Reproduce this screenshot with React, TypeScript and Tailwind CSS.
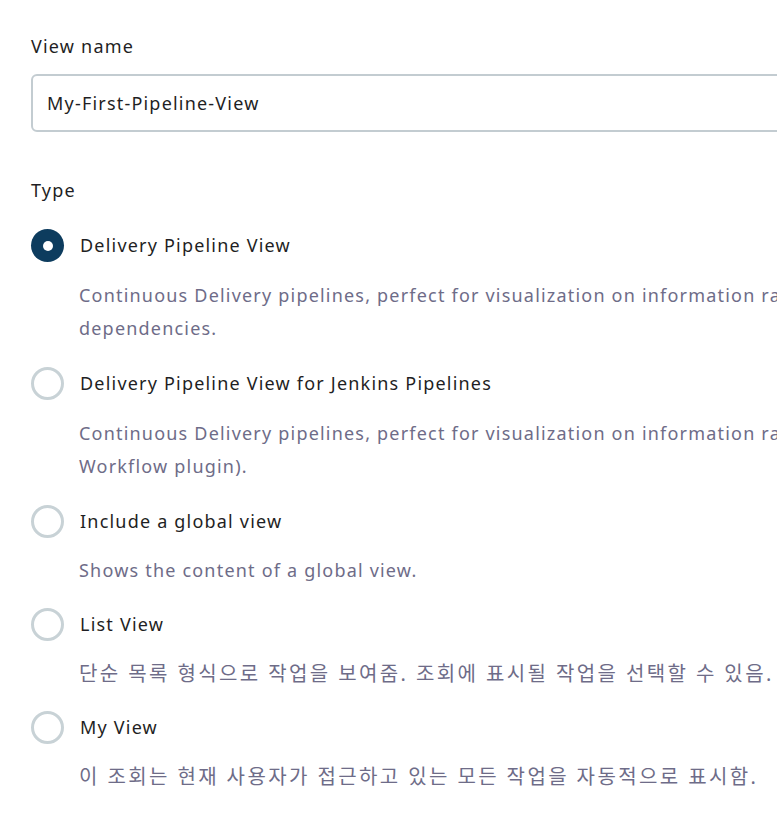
const font = { fontFamily: '"Noto Sans", "Noto Sans CJK KR", sans-serif' };

const types = [
  {
    name: "Delivery Pipeline View",
    checked: true,
    lines: [
      "Continuous Delivery pipelines, perfect for visualization on information radiators. Shows one or more delivery pipelines, with upstream/downstream",
      "dependencies.",
    ],
  },
  {
    name: "Delivery Pipeline View for Jenkins Pipelines",
    lines: [
      "Continuous Delivery pipelines, perfect for visualization on information radiators. Shows one or more delivery pipelines, using Jenkins Pipeline (a.k.a.",
      "Workflow plugin).",
    ],
  },
  { name: "Include a global view", lines: ["Shows the content of a global view."] },
  {
    name: "List View",
    korean: true,
    lines: ["단순 목록 형식으로 작업을 보여줌. 조회에 표시될 작업을 선택할 수 있음."],
  },
  {
    name: "My View",
    korean: true,
    lines: ["이 조회는 현재 사용자가 접근하고 있는 모든 작업을 자동적으로 표시함."],
  },
];

function Radio({ checked }: { checked?: boolean }) {
  if (checked) {
    return (
      <span className="flex items-center justify-center w-[33px] h-[33px] rounded-full bg-[#0d3c5e] shrink-0">
        <span className="w-[10px] h-[10px] rounded-full bg-white" />
      </span>
    );
  }
  return <span className="w-[33px] h-[33px] rounded-full border-[3px] border-[#c8d2d6] bg-white shrink-0" />;
}

export default function App() {
  return (
    <div className="w-full min-h-screen bg-white overflow-hidden" style={font}>
      <div className="w-[1300px] pl-[31px] pt-[30px] text-[18px] leading-[33px] tracking-[1.2px] text-[#1f1f24]">
        <div>View name</div>
        <div className="mt-[11px] h-[58px] border-2 border-[#c3ccd1] rounded-md flex items-center pl-[14px]">
          My-First-Pipeline-View
        </div>

        <div className="mt-[42px]">Type</div>

        <div className="mt-[22px] flex flex-col">
          {types.map((t, i) => (
            <div key={t.name} className={i === 0 ? "" : i < 3 ? "mt-[22px]" : "mt-[21px]"}>
              <label className="flex items-center gap-4 h-[33px]">
                <Radio checked={t.checked} />
                <span>{t.name}</span>
              </label>
              <div
                className={
                  t.lines.length > 1
                    ? "mt-[17px] pl-[48px] text-[#6e6c88] whitespace-nowrap"
                    : "mt-[16px] pl-[48px] text-[#6e6c88] whitespace-nowrap"
                }
              >
                {t.lines.map((l) => (
                  <div
                    key={l}
                    className={
                      t.korean
                        ? "h-[33px] flex items-center text-[20px] tracking-[2.4px]"
                        : "h-[33px] flex items-center"
                    }
                  >
                    {l}
                  </div>
                ))}
              </div>
            </div>
          ))}
        </div>
      </div>
    </div>
  );
}
